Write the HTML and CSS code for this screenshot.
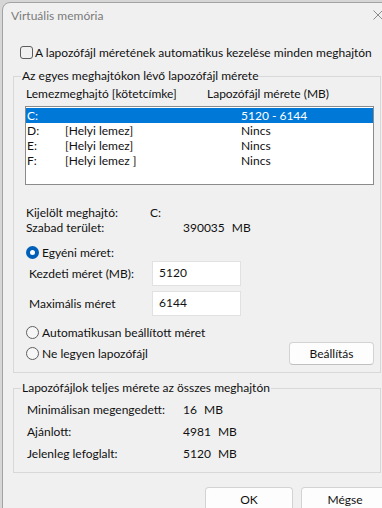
FILE: index.html
```html
<!DOCTYPE html>
<html lang="hu">
<head>
  <meta charset="UTF-8" />
  <meta name="viewport" content="width=device-width, initial-scale=1.0" />
  <title>Virtuális memória</title>
  <link rel="stylesheet" href="styles.css">
</head>
<body>

<div class="dialog">
  <div class="title-bar">
    <span class="title">Virtuális memória</span>
    <span class="close">
      <svg width="10" height="10" viewBox="0 0 10 10"><path d="M0.5 0.5 L9.5 9.5 M9.5 0.5 L0.5 9.5" stroke="#8c8c8c" stroke-width="1" fill="none"/></svg>
    </span>
  </div>

  <div class="auto-check"><span class="checkbox"></span>A lapozófájl méretének automatikus kezelése minden meghajtón</div>

  <fieldset class="group">
    <legend>Az egyes meghajtókon lévő lapozófájl mérete</legend>
    <div class="group-body drives">
      <div class="list-head">
        <span>Lemezmeghajtó [kötetcímke]</span>
        <span>Lapozófájl mérete (MB)</span>
      </div>
      <div class="listbox">
        <div class="list-row selected"><span>C:</span><span></span><span>5120 - 6144</span></div>
        <div class="list-row"><span>D:</span><span>[Helyi lemez]</span><span>Nincs</span></div>
        <div class="list-row"><span>E:</span><span>[Helyi lemez]</span><span>Nincs</span></div>
        <div class="list-row"><span>F:</span><span>[Helyi lemez ]</span><span>Nincs</span></div>
      </div>

      <div class="info first"><span class="info-label short">Kijelölt meghajtó:</span><span>C:</span></div>
      <div class="info"><span class="info-label">Szabad terület:</span><span class="value">390035 MB</span></div>

      <div class="radio-row custom"><span class="radio checked"></span>Egyéni méret:</div>
      <div class="size-row first"><span class="size-label">Kezdeti méret (MB):</span><span class="input">5120</span></div>
      <div class="size-row"><span class="size-label">Maximális méret</span><span class="input">6144</span></div>
      <div class="radio-row auto"><span class="radio"></span>Automatikusan beállított méret</div>
      <div class="radio-row none"><span class="radio"></span>Ne legyen lapozófájl<button class="btn btn-set">Beállítás</button></div>
    </div>
  </fieldset>

  <fieldset class="group totals">
    <legend>Lapozófájlok teljes mérete az összes meghajtón</legend>
    <div class="group-body">
      <div class="total-row first"><span class="total-label">Minimálisan megengedett:</span><span class="value">16 MB</span></div>
      <div class="total-row"><span class="total-label">Ajánlott:</span><span class="value">4981 MB</span></div>
      <div class="total-row"><span class="total-label">Jelenleg lefoglalt:</span><span class="value">5120 MB</span></div>
    </div>
  </fieldset>

  <div class="actions">
    <button class="btn btn-main">OK</button>
    <button class="btn btn-main">Mégse</button>
  </div>
</div>

</body>
</html>
```

FILE: styles.css
```css
* {
  box-sizing: border-box;
}

body, html {
  margin: 0;
  padding: 0;
  height: 100%;
  overflow: hidden;
  background: #d6d6d6;
  font-family: 'Lato', 'Liberation Sans', sans-serif;
  font-size: 12px;
  color: #111;
}

.dialog {
  margin: 2px 0 0 2px;
  width: 400px;
  height: 530px;
  background: #f0f0f0;
  border: 1px solid #a3a3a3;
  border-radius: 8px 8px 0 0;
}

.title-bar {
  display: flex;
  justify-content: space-between;
  align-items: center;
  height: 24px;
  padding-left: 8px;
}

.title {
  color: #7b7b7b;
}

.close {
  display: flex;
  align-items: center;
  justify-content: center;
  width: 46px;
  height: 24px;
}

.auto-check {
  display: flex;
  align-items: center;
  height: 16px;
  margin: 17px 0 0 17px;
}

.checkbox {
  width: 13px;
  height: 13px;
  margin-right: 2px;
  border: 1px solid #5c5c5c;
  border-radius: 3px;
}

.group {
  margin: 8px 0 0 10px;
  padding: 0;
  width: 368px;
  min-width: 0;
  border: 1px solid #d8d8d8;
}

.group legend {
  margin-left: 7px;
  padding: 0 1px;
  line-height: 16px;
}

.group-body {
  padding: 0 6px 7px 11px;
}

.list-head {
  display: grid;
  grid-template-columns: 181px 1fr;
  margin-top: 2px;
  padding-left: 1px;
  line-height: 16px;
}

.listbox {
  margin-top: 4px;
  width: 349px;
  height: 79px;
  padding: 1px 0;
  background: #fff;
  border: 1px solid #8b8b8b;
}

.list-row {
  display: grid;
  grid-template-columns: 38px 176px 1fr;
  height: 15px;
  padding-left: 1px;
  line-height: 15px;
}

.list-row.selected {
  background: #0078d7;
  color: #fff;
}

.info {
  display: flex;
  line-height: 15px;
  padding-left: 1px;
}

.info.first {
  margin-top: 20px;
}

.info-label {
  width: 157px;
}

.info-label.short {
  width: 124px;
}

.value {
  word-spacing: 4px;
}

.radio-row {
  display: flex;
  align-items: center;
  height: 16px;
  padding-left: 1px;
}

.radio-row.custom {
  margin-top: 9px;
}

.radio-row.auto {
  margin-top: 8px;
}

.radio-row.none {
  height: 23px;
  margin-top: 2px;
}

.radio {
  width: 13px;
  height: 13px;
  margin-right: 3px;
  border: 1px solid #5f5f5f;
  border-radius: 50%;
  background: #f6f6f6;
}

.radio.checked {
  border: 4px solid #005fb8;
  background: #fff;
}

.size-row {
  display: flex;
  align-items: center;
  height: 25px;
  margin-top: 5px;
}

.size-row.first {
  margin-top: 1px;
}

.size-label {
  width: 127px;
  padding-left: 4px;
}

.input {
  width: 89px;
  height: 25px;
  padding: 3px 0 0 6px;
  background: #fff;
  border: 1px solid #e1e1e1;
  line-height: 16px;
}

.btn {
  font-family: inherit;
  font-size: 12px;
  color: #111;
  background: #fdfdfd;
  border: 1px solid #d3d3d3;
  border-bottom-color: #c0c0c0;
  border-radius: 4px;
  padding: 0;
}

.btn-set {
  margin-left: auto;
  width: 85px;
  height: 23px;
}

.totals {
  margin-top: 7px;
}

.total-row {
  display: flex;
  align-items: center;
  height: 22px;
  padding-left: 2px;
}

.total-row.first {
  margin-top: 2px;
}

.totals .group-body {
  padding-bottom: 8px;
}

.total-label {
  width: 156px;
}

.actions {
  display: flex;
  gap: 8px;
  margin: 14px 0 0 202px;
}

.btn-main {
  width: 88px;
  height: 24px;
}
```
